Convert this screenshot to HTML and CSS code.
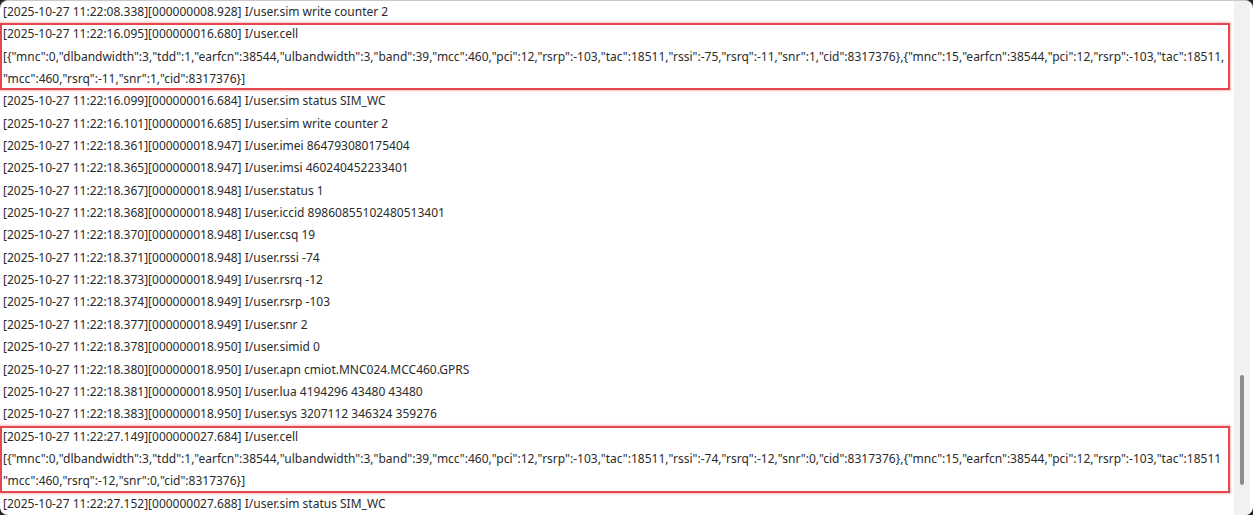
FILE: index.html
```html
<!DOCTYPE html>
<html lang="en">
<head>
<meta charset="utf-8">
<title>Log</title>
<link rel="stylesheet" href="styles.css">
</head>
<body>
<div class="panel">
  <div class="log">
    <div class="row">[2025-10-27 11:22:08.338][000000008.928] I/user.sim write counter 2</div>
    <div class="mark">
      <div class="row">[2025-10-27 11:22:16.095][000000016.680] I/user.cell</div>
      <div class="row">[{"mnc":0,"dlbandwidth":3,"tdd":1,"earfcn":38544,"ulbandwidth":3,"band":39,"mcc":460,"pci":12,"rsrp":-103,"tac":18511,"rssi":-75,"rsrq":-11,"snr":1,"cid":8317376},{"mnc":15,"earfcn":38544,"pci":12,"rsrp":-103,"tac":18511,</div>
      <div class="row">"mcc":460,"rsrq":-11,"snr":1,"cid":8317376}]</div>
    </div>
    <div class="row">[2025-10-27 11:22:16.099][000000016.684] I/user.sim status SIM_WC</div>
    <div class="row">[2025-10-27 11:22:16.101][000000016.685] I/user.sim write counter 2</div>
    <div class="row">[2025-10-27 11:22:18.361][000000018.947] I/user.imei 864793080175404</div>
    <div class="row">[2025-10-27 11:22:18.365][000000018.947] I/user.imsi 460240452233401</div>
    <div class="row">[2025-10-27 11:22:18.367][000000018.948] I/user.status 1</div>
    <div class="row">[2025-10-27 11:22:18.368][000000018.948] I/user.iccid 89860855102480513401</div>
    <div class="row">[2025-10-27 11:22:18.370][000000018.948] I/user.csq 19</div>
    <div class="row">[2025-10-27 11:22:18.371][000000018.948] I/user.rssi -74</div>
    <div class="row">[2025-10-27 11:22:18.373][000000018.949] I/user.rsrq -12</div>
    <div class="row">[2025-10-27 11:22:18.374][000000018.949] I/user.rsrp -103</div>
    <div class="row">[2025-10-27 11:22:18.377][000000018.949] I/user.snr 2</div>
    <div class="row">[2025-10-27 11:22:18.378][000000018.950] I/user.simid 0</div>
    <div class="row">[2025-10-27 11:22:18.380][000000018.950] I/user.apn cmiot.MNC024.MCC460.GPRS</div>
    <div class="row">[2025-10-27 11:22:18.381][000000018.950] I/user.lua 4194296 43480 43480</div>
    <div class="row">[2025-10-27 11:22:18.383][000000018.950] I/user.sys 3207112 346324 359276</div>
    <div class="mark">
      <div class="row">[2025-10-27 11:22:27.149][000000027.684] I/user.cell</div>
      <div class="row">[{"mnc":0,"dlbandwidth":3,"tdd":1,"earfcn":38544,"ulbandwidth":3,"band":39,"mcc":460,"pci":12,"rsrp":-103,"tac":18511,"rssi":-74,"rsrq":-12,"snr":0,"cid":8317376},{"mnc":15,"earfcn":38544,"pci":12,"rsrp":-103,"tac":18511</div>
      <div class="row">"mcc":460,"rsrq":-12,"snr":0,"cid":8317376}]</div>
    </div>
    <div class="row">[2025-10-27 11:22:27.152][000000027.688] I/user.sim status SIM_WC</div>
  </div>
  <div class="track"><div class="thumb"></div></div>
</div>
</body>
</html>
```
FILE: styles.css
```css
html, body {
  margin: 0;
  padding: 0;
  background: #262626;
}
.panel {
  width: 1253px;
  height: 515px;
  background: #ffffff;
  border-radius: 8px;
  border-top: 1px solid #c9c9c9;
  box-sizing: border-box;
  overflow: hidden;
  display: flex;
}
.log {
  flex: 1;
  min-width: 0;
  overflow: hidden;
  padding-right: 4px;
}
.row {
  height: 22.35px;
  line-height: 22.35px;
  padding-left: 3px;
  white-space: nowrap;
  overflow: hidden;
  font-family: "Noto Sans", "Liberation Sans", sans-serif;
  font-size: 12px;
  color: #2b2b2b;
}
.mark {
  outline: 2px solid #e6474c;
  outline-offset: -2px;
  box-shadow: 0 0 2px 1px rgba(232, 72, 75, 0.35);
}
.track {
  width: 16px;
  flex: none;
  background: #f1f1f1;
  margin-right: 3px;
  padding-top: 374px;
  box-sizing: border-box;
}
.thumb {
  width: 4px;
  height: 110px;
  margin-left: 6px;
  background: #8d8d8d;
  border-radius: 2px;
}
```
